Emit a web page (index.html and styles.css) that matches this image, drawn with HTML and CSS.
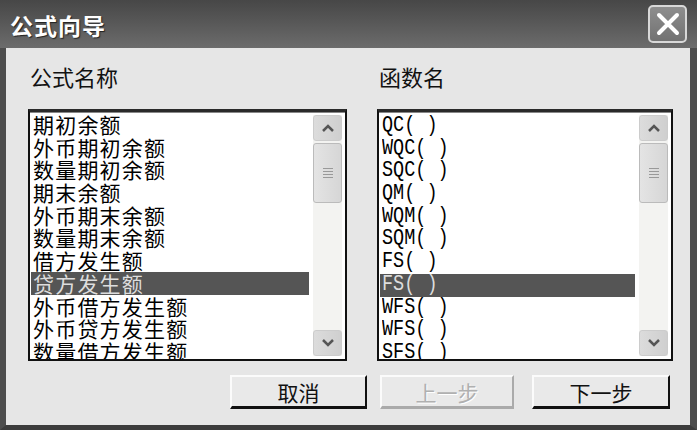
FILE: index.html
```html
<!DOCTYPE html>
<html lang="zh">
<head>
<meta charset="utf-8">
<title>公式向导</title>
<link rel="stylesheet" href="styles.css">
</head>
<body>
<div class="window">
  <div class="titlebar">
    <span class="title">公式向导</span>
    <span class="close">
      <svg width="26" height="26" viewBox="0 0 26 26"><path d="M4 4 L22 22 M22 4 L4 22" stroke="#fff" stroke-width="4" stroke-linecap="round"/></svg>
    </span>
  </div>
  <div class="body">
    <div class="columns">
      <div class="col">
        <div class="label">公式名称</div>
        <div class="listbox">
          <ul class="items cjk">
            <li>期初余额</li>
            <li>外币期初余额</li>
            <li>数量期初余额</li>
            <li>期末余额</li>
            <li>外币期末余额</li>
            <li>数量期末余额</li>
            <li>借方发生额</li>
            <li class="sel">贷方发生额</li>
            <li>外币借方发生额</li>
            <li>外币贷方发生额</li>
            <li>数量借方发生额</li>
          </ul>
          <div class="scrollbar">
            <div class="sbtn"><svg width="14" height="10" viewBox="0 0 14 10"><path d="M2 8 L7 3 L12 8" fill="none" stroke="#555" stroke-width="2.5"/></svg></div>
            <div class="thumb"><span></span><span></span><span></span><span></span></div>
            <div class="track"></div>
            <div class="sbtn"><svg width="14" height="10" viewBox="0 0 14 10"><path d="M2 2 L7 7 L12 2" fill="none" stroke="#555" stroke-width="2.5"/></svg></div>
          </div>
        </div>
      </div>
      <div class="col">
        <div class="label">函数名</div>
        <div class="listbox">
          <ul class="items mono">
            <li><span>QC( )</span></li>
            <li><span>WQC( )</span></li>
            <li><span>SQC( )</span></li>
            <li><span>QM( )</span></li>
            <li><span>WQM( )</span></li>
            <li><span>SQM( )</span></li>
            <li><span>FS( )</span></li>
            <li class="sel"><span>FS( )</span></li>
            <li><span>WFS( )</span></li>
            <li><span>WFS( )</span></li>
            <li><span>SFS( )</span></li>
          </ul>
          <div class="scrollbar">
            <div class="sbtn"><svg width="14" height="10" viewBox="0 0 14 10"><path d="M2 8 L7 3 L12 8" fill="none" stroke="#555" stroke-width="2.5"/></svg></div>
            <div class="thumb"><span></span><span></span><span></span><span></span></div>
            <div class="track"></div>
            <div class="sbtn"><svg width="14" height="10" viewBox="0 0 14 10"><path d="M2 2 L7 7 L12 2" fill="none" stroke="#555" stroke-width="2.5"/></svg></div>
          </div>
        </div>
      </div>
    </div>
    <div class="buttons">
      <button class="btn b1">取消</button>
      <button class="btn b2" disabled>上一步</button>
      <button class="btn b3">下一步</button>
    </div>
  </div>
</div>
</body>
</html>
```
FILE: styles.css
```css
* { box-sizing: border-box; }
html, body { margin: 0; padding: 0; }
body {
  width: 697px;
  height: 430px;
  overflow: hidden;
  font-family: "Noto Sans CJK SC", "Liberation Sans", sans-serif;
  background: #e6e6e6;
}
.window {
  width: 697px;
  height: 430px;
  display: flex;
  flex-direction: column;
}
.titlebar {
  height: 48px;
  flex: none;
  background: linear-gradient(#474747, #575757 45%, #6c6c6c);
  display: flex;
  align-items: center;
  justify-content: space-between;
  padding: 0 10px 0 10px;
}
.title {
  color: #fff;
  font-size: 23px;
  font-weight: bold;
  line-height: 24px;
  letter-spacing: 1px;
  text-shadow: 1px 1px 1px #222;
  margin-top: 2px;
}
.close {
  width: 39px;
  height: 38px;
  border: 2px solid #d8d8d8;
  border-radius: 5px;
  background: linear-gradient(#8e8e8e, #727272);
  display: flex;
  align-items: center;
  justify-content: center;
  margin-top: -1px;
}
.body {
  flex: 1;
  background: #e6e6e6;
  border-left: 6px solid #4d4d4d;
  border-right: 7px solid #4d4d4d;
  border-bottom: 5px solid #3c3c3c;
  padding: 15px 17px 0 22px;
  display: flex;
  flex-direction: column;
}
.columns {
  display: grid;
  grid-template-columns: 319px 296px;
  column-gap: 30px;
}
.label {
  font-size: 22px;
  line-height: 26px;
  color: #111;
  padding-left: 2px;
  margin-bottom: 20px;
}
.listbox {
  height: 252px;
  background: #fff;
  border: 2px solid #111;
  border-top: 3px solid #2a2a2a;
  box-shadow: inset 0 1px 0 #888;
  display: flex;
  overflow: hidden;
}
.items {
  flex: 1;
  list-style: none;
  margin: 0;
  padding: 1px 2px 0 1px;
  overflow: hidden;
}
.items li {
  height: 22.7px;
  line-height: 22.7px;
  white-space: nowrap;
  color: #000;
  padding-left: 2px;
}
.items li.sel {
  background: #555;
  color: #ddd;
}
.cjk li {
  font-size: 21px;
  letter-spacing: 1.2px;
}
.mono {
  padding-top: 3px;
}
.mono li {
  font-family: "Liberation Mono", "DejaVu Sans Mono", monospace;
  font-size: 18.5px;
}
.mono li span {
  display: inline-block;
  transform: scaleY(1.2);
  transform-origin: left center;
}
.scrollbar {
  width: 29px;
  flex: none;
  margin: 3px 3px 3px 2px;
  display: flex;
  flex-direction: column;
  gap: 2px;
  background: #f3f3f1;
}
.sbtn {
  height: 26px;
  flex: none;
  border: 1px solid #ccc;
  border-radius: 3px;
  background: linear-gradient(90deg, #dcdcdc, #cfcfcf);
  display: flex;
  align-items: center;
  justify-content: center;
}
.thumb {
  height: 60px;
  flex: none;
  border: 1px solid #bbb;
  border-radius: 3px;
  background: linear-gradient(90deg, #e4e4e4, #d6d6d6);
  display: flex;
  flex-direction: column;
  align-items: center;
  justify-content: center;
  gap: 2px;
}
.thumb span {
  display: block;
  width: 10px;
  height: 1px;
  background: #999;
}
.track { flex: 1; }
.buttons {
  display: flex;
  justify-content: flex-end;
  margin-top: 14px;
  padding-right: 3px;
}
.btn {
  height: 34px;
  font-family: "Noto Sans CJK SC", sans-serif;
  font-size: 21px;
  line-height: 26px;
  color: #111;
  background: #e9e9e9;
  border: none;
  border-top: 2px solid #fbfbfb;
  border-left: 2px solid #fbfbfb;
  border-right: 2px solid #111;
  border-bottom: 3px solid #111;
  padding: 0;
}
.b1 { width: 137px; margin-right: 13px; }
.b2 {
  width: 134px;
  margin-right: 18px;
  color: #b0b0b0;
  text-shadow: 1px 1px 0 #fff;
  border-right-color: #aaa;
  border-bottom-color: #aaa;
}
.b3 { width: 138px; }
```
